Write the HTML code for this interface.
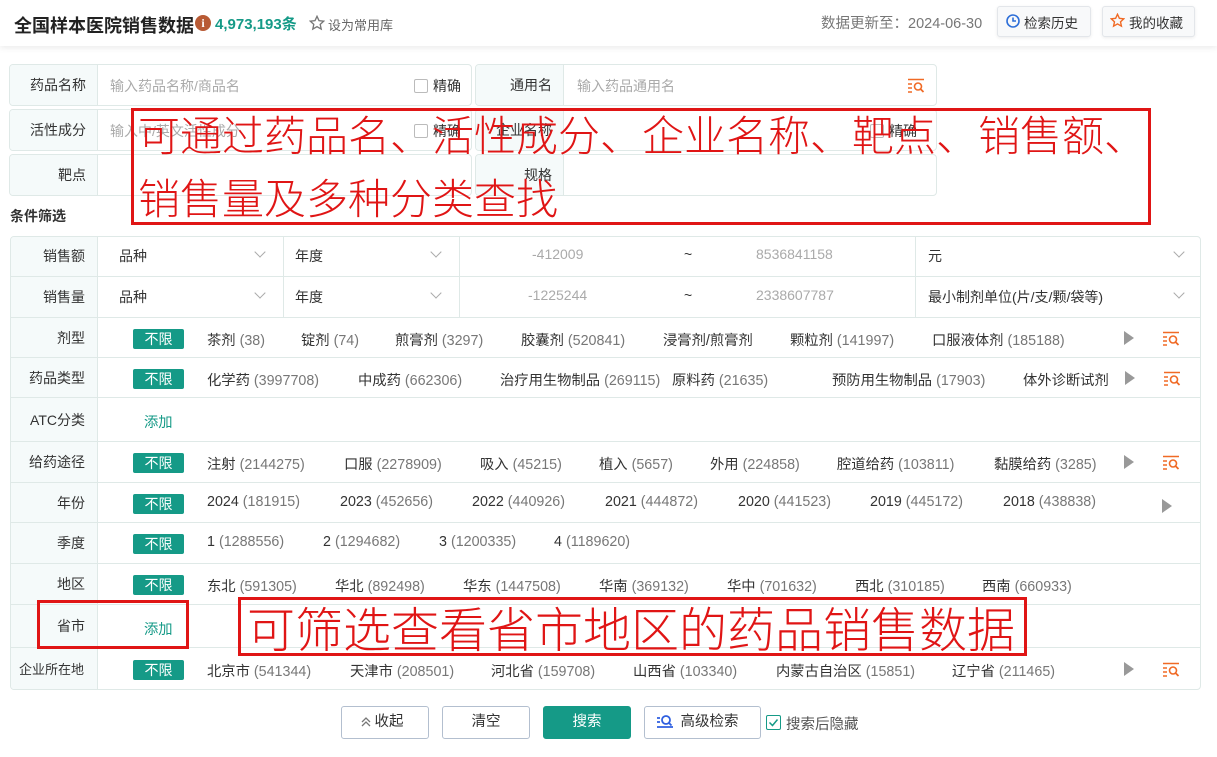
<!DOCTYPE html>
<html><head><meta charset="utf-8"><style>
*{box-sizing:border-box;margin:0;padding:0}
body{width:1217px;height:757px;overflow:hidden;background:#fff;font-family:"Liberation Sans","Noto Sans CJK SC",sans-serif;font-size:14px;color:#333;position:relative}
.a{position:absolute;white-space:nowrap}
.top{position:absolute;left:0;top:0;width:1217px;height:46px;background:#fff;box-shadow:0 2px 6px rgba(0,0,0,.08)}
.box{position:absolute;border:1px solid #dfe9e7;border-radius:4px;background:#fff;overflow:hidden}
.lab{position:absolute;left:0;top:0;bottom:0;background:#f5fafa;border-right:1px solid #dfe9e7;text-align:right;padding-right:11px}
.ph{color:#aaa}
.chk{display:inline-block;width:14px;height:14px;border:1px solid #bbb;border-radius:2px;vertical-align:-2px;margin-right:5px;background:#fff}
.tbl{position:absolute;left:10px;top:236px;width:1191px;height:454px;border:1px solid #dfe9e7;border-radius:4px;overflow:hidden}
.row{position:absolute;left:0;width:1191px;border-top:1px solid #dfe9e7}
.rl{position:absolute;left:0;top:0;bottom:0;width:87px;background:#f5fafa;border-right:1px solid #dfe9e7;text-align:right;padding-right:12px;white-space:nowrap}
.tag{position:absolute;left:122px;width:51px;height:20px;background:#159a87;color:#fff;border-radius:2px;text-align:center;line-height:20px;font-size:14px}
.it{position:absolute;white-space:nowrap;font-size:14.3px}
.it i{font-style:normal;color:#777}
.tri{position:absolute;width:0;height:0;border-left:10px solid #999;border-top:7px solid transparent;border-bottom:7px solid transparent}
.cell{position:absolute;top:0;bottom:0;border-right:1px solid #dfe9e7}
.chev{position:absolute;width:8px;height:8px;border-right:1px solid #aaa;border-bottom:1px solid #aaa;transform:rotate(45deg)}
.red{position:absolute;border:3px solid #e01515}
.rt{position:absolute;color:#e01515;white-space:nowrap;font-family:"Noto Sans CJK SC",sans-serif;font-weight:300}
.btn{position:absolute;top:706px;height:33px;border:1px solid #b3bfcf;border-radius:3px;text-align:center;line-height:31px;background:#fff;font-size:14.5px}
</style></head><body>
<div class="top"></div>
<div class="a" style="left:14px;top:12px;font-size:18px;font-weight:bold;color:#222">全国样本医院销售数据</div>
<div class="a" style="left:195px;top:15px;width:16px;height:16px;border-radius:50%;background:#b85a34;color:#fff;font-size:12px;font-weight:bold;text-align:center;line-height:16px;font-family:'Liberation Serif',serif">i</div>
<div class="a" style="left:215px;top:13px;font-size:15px;font-weight:bold;color:#159a87">4,973,193条</div>
<svg class="a" style="left:309px;top:15px" width="16" height="16" viewBox="0 0 24 24"><path d="M12 2l3 6.5 7 .8-5.2 4.8 1.5 7L12 17.5 5.7 21.1l1.5-7L2 9.3l7-.8z" fill="none" stroke="#777" stroke-width="2"/></svg>
<div class="a" style="left:328px;top:15px;font-size:13px;color:#666">设为常用库</div>
<div class="a" style="left:821px;top:12px;font-size:14.5px;color:#777">数据更新至：2024-06-30</div>
<div class="a" style="left:997px;top:6px;width:94px;height:31px;border:1px solid #e3e6ea;border-radius:3px;background:#f8f9fa;box-shadow:0 1px 3px rgba(0,0,0,.08)"></div>
<svg class="a" style="left:1006px;top:14px" width="14" height="14" viewBox="0 0 14 14"><circle cx="7" cy="7" r="6" fill="none" stroke="#2e6fd8" stroke-width="1.6"/><path d="M7 3.5V7h3" fill="none" stroke="#2e6fd8" stroke-width="1.6"/></svg>
<div class="a" style="left:1024px;top:12px;font-size:13.5px">检索历史</div>
<div class="a" style="left:1102px;top:6px;width:93px;height:31px;border:1px solid #e3e6ea;border-radius:3px;background:#f8f9fa;box-shadow:0 1px 3px rgba(0,0,0,.08)"></div>
<svg class="a" style="left:1110px;top:13px" width="15" height="15" viewBox="0 0 24 24"><path d="M12 2l3 6.5 7 .8-5.2 4.8 1.5 7L12 17.5 5.7 21.1l1.5-7L2 9.3l7-.8z" fill="none" stroke="#f06a25" stroke-width="2.2"/></svg>
<div class="a" style="left:1129px;top:12px;font-size:13.5px">我的收藏</div>

<div class="box" style="left:9px;top:64px;width:463px;height:42px"><div class="lab" style="width:88px;line-height:40px">药品名称</div><div class="a ph" style="left:100px;top:11px">输入药品名称/商品名</div><div class="a" style="left:404px;top:11px"><span class="chk"></span>精确</div></div>
<div class="box" style="left:475px;top:64px;width:462px;height:42px"><div class="lab" style="width:88px;line-height:40px">通用名</div><div class="a ph" style="left:101px;top:11px">输入药品通用名</div>
<svg class="a" style="left:431px;top:13px" width="18" height="15" viewBox="0 0 18 15"><path d="M1 1.5h16M1 6h4M1 10h4M1 14h4" stroke="#f06a25" stroke-width="1.6"/><circle cx="11" cy="8.5" r="3.5" fill="none" stroke="#f06a25" stroke-width="1.6"/><path d="M13.5 11l3 3" stroke="#f06a25" stroke-width="1.8"/></svg></div>
<div class="box" style="left:9px;top:109px;width:463px;height:42px"><div class="lab" style="width:88px;line-height:40px">活性成分</div><div class="a ph" style="left:100px;top:11px">输入中/英文活性成分</div><div class="a" style="left:404px;top:11px"><span class="chk"></span>精确</div></div>
<div class="box" style="left:475px;top:109px;width:462px;height:42px"><div class="lab" style="width:88px;line-height:40px">企业名称</div><div class="a" style="left:394px;top:11px"><span class="chk"></span>精确</div></div>
<div class="box" style="left:9px;top:154px;width:463px;height:42px"><div class="lab" style="width:88px;line-height:40px">靶点</div></div>
<div class="box" style="left:475px;top:154px;width:462px;height:42px"><div class="lab" style="width:88px;line-height:40px">规格</div></div>
<div class="a" style="left:10px;top:206px;font-size:14px;font-weight:bold">条件筛选</div>

<div class="tbl">
<div class="row" style="top:-1px;height:41px;border-top:none"><div class="rl" style="line-height:40px">销售额</div>
<div class="cell" style="left:87px;width:186px"><span class="a" style="left:21px;top:10px">品种</span><span class="chev" style="left:158px;top:12px"></span></div>
<div class="cell" style="left:273px;width:176px"><span class="a" style="left:11px;top:10px">年度</span><span class="chev" style="left:148px;top:12px"></span></div>
<div class="cell" style="left:449px;width:456px"><span class="a ph" style="left:72px;top:10px">-412009</span><span class="a" style="left:224px;top:10px">~</span><span class="a ph" style="left:296px;top:10px">8536841158</span></div>
<span class="a" style="left:917px;top:10px">元</span><span class="chev" style="left:1164px;top:12px"></span></div>
<div class="row" style="top:39px;height:41px"><div class="rl" style="line-height:40px">销售量</div>
<div class="cell" style="left:87px;width:186px"><span class="a" style="left:21px;top:10px">品种</span><span class="chev" style="left:158px;top:12px"></span></div>
<div class="cell" style="left:273px;width:176px"><span class="a" style="left:11px;top:10px">年度</span><span class="chev" style="left:148px;top:12px"></span></div>
<div class="cell" style="left:449px;width:456px"><span class="a ph" style="left:68px;top:10px">-1225244</span><span class="a" style="left:224px;top:10px">~</span><span class="a ph" style="left:296px;top:10px">2338607787</span></div>
<span class="a" style="left:917px;top:10px">最小制剂单位(片/支/颗/袋等)</span><span class="chev" style="left:1164px;top:12px"></span></div>

<div class="row" style="top:80px;height:41px"><div class="rl" style="line-height:40px">剂型</div><div class="tag" style="top:11px">不限</div>
<span class="it" style="left:196px;top:11px">茶剂 <i>(38)</i></span><span class="it" style="left:290px;top:11px">锭剂 <i>(74)</i></span><span class="it" style="left:384px;top:11px">煎膏剂 <i>(3297)</i></span><span class="it" style="left:510px;top:11px">胶囊剂 <i>(520841)</i></span><span class="it" style="left:652px;top:11px">浸膏剂/煎膏剂</span><span class="it" style="left:779px;top:11px">颗粒剂 <i>(141997)</i></span><span class="it" style="left:921px;top:11px">口服液体剂 <i>(185188)</i></span>
<div class="tri" style="left:1113px;top:13px"></div><svg class="a" style="left:1151px;top:13px" width="18" height="15" viewBox="0 0 18 15"><path d="M1 1.5h16M1 6h4M1 10h4M1 14h4" stroke="#f06a25" stroke-width="1.6"/><circle cx="11" cy="8.5" r="3.5" fill="none" stroke="#f06a25" stroke-width="1.6"/><path d="M13.5 11l3 3" stroke="#f06a25" stroke-width="1.8"/></svg></div>

<div class="row" style="top:120px;height:41px"><div class="rl" style="line-height:40px">药品类型</div><div class="tag" style="top:11px">不限</div>
<span class="it" style="left:196px;top:11px">化学药 <i>(3997708)</i></span><span class="it" style="left:347px;top:11px">中成药 <i>(662306)</i></span><span class="it" style="left:489px;top:11px">治疗用生物制品 <i>(269115)</i></span><span class="it" style="left:661px;top:11px">原料药 <i>(21635)</i></span><span class="it" style="left:821px;top:11px">预防用生物制品 <i>(17903)</i></span><span class="it" style="left:1012px;top:11px">体外诊断试剂</span>
<div class="tri" style="left:1114px;top:13px"></div><svg class="a" style="left:1152px;top:13px" width="18" height="15" viewBox="0 0 18 15"><path d="M1 1.5h16M1 6h4M1 10h4M1 14h4" stroke="#f06a25" stroke-width="1.6"/><circle cx="11" cy="8.5" r="3.5" fill="none" stroke="#f06a25" stroke-width="1.6"/><path d="M13.5 11l3 3" stroke="#f06a25" stroke-width="1.8"/></svg></div>

<div class="row" style="top:160px;height:45px"><div class="rl" style="line-height:44px">ATC分类</div><span class="it" style="left:133px;top:13px;color:#159a87">添加</span></div>

<div class="row" style="top:204px;height:42px"><div class="rl" style="line-height:41px">给药途径</div><div class="tag" style="top:11px">不限</div>
<span class="it" style="left:196px;top:11px">注射 <i>(2144275)</i></span><span class="it" style="left:333px;top:11px">口服 <i>(2278909)</i></span><span class="it" style="left:469px;top:11px">吸入 <i>(45215)</i></span><span class="it" style="left:588px;top:11px">植入 <i>(5657)</i></span><span class="it" style="left:699px;top:11px">外用 <i>(224858)</i></span><span class="it" style="left:826px;top:11px">腔道给药 <i>(103811)</i></span><span class="it" style="left:983px;top:11px">黏膜给药 <i>(3285)</i></span>
<div class="tri" style="left:1113px;top:13px"></div><svg class="a" style="left:1151px;top:13px" width="18" height="15" viewBox="0 0 18 15"><path d="M1 1.5h16M1 6h4M1 10h4M1 14h4" stroke="#f06a25" stroke-width="1.6"/><circle cx="11" cy="8.5" r="3.5" fill="none" stroke="#f06a25" stroke-width="1.6"/><path d="M13.5 11l3 3" stroke="#f06a25" stroke-width="1.8"/></svg></div>

<div class="row" style="top:245px;height:41px"><div class="rl" style="line-height:40px">年份</div><div class="tag" style="top:11px">不限</div>
<span class="it" style="left:196px;top:11px">2024 <i>(181915)</i></span><span class="it" style="left:329px;top:11px">2023 <i>(452656)</i></span><span class="it" style="left:461px;top:11px">2022 <i>(440926)</i></span><span class="it" style="left:594px;top:11px">2021 <i>(444872)</i></span><span class="it" style="left:727px;top:11px">2020 <i>(441523)</i></span><span class="it" style="left:859px;top:11px">2019 <i>(445172)</i></span><span class="it" style="left:992px;top:11px">2018 <i>(438838)</i></span>
<div class="tri" style="left:1151px;top:16px"></div></div>

<div class="row" style="top:285px;height:41px"><div class="rl" style="line-height:40px">季度</div><div class="tag" style="top:11px">不限</div>
<span class="it" style="left:196px;top:11px">1 <i>(1288556)</i></span><span class="it" style="left:312px;top:11px">2 <i>(1294682)</i></span><span class="it" style="left:428px;top:11px">3 <i>(1200335)</i></span><span class="it" style="left:543px;top:11px">4 <i>(1189620)</i></span></div>

<div class="row" style="top:326px;height:41px"><div class="rl" style="line-height:40px">地区</div><div class="tag" style="top:11px">不限</div>
<span class="it" style="left:196px;top:11px">东北 <i>(591305)</i></span><span class="it" style="left:324px;top:11px">华北 <i>(892498)</i></span><span class="it" style="left:452px;top:11px">华东 <i>(1447508)</i></span><span class="it" style="left:588px;top:11px">华南 <i>(369132)</i></span><span class="it" style="left:716px;top:11px">华中 <i>(701632)</i></span><span class="it" style="left:844px;top:11px">西北 <i>(310185)</i></span><span class="it" style="left:971px;top:11px">西南 <i>(660933)</i></span></div>

<div class="row" style="top:367px;height:44px"><div class="rl" style="line-height:43px">省市</div><span class="it" style="left:133px;top:13px;color:#159a87">添加</span></div>

<div class="row" style="top:410px;height:44px"><div class="rl" style="line-height:43px;padding-right:13px;font-size:13px">企业所在地</div><div class="tag" style="top:12px">不限</div>
<span class="it" style="left:196px;top:12px">北京市 <i>(541344)</i></span><span class="it" style="left:339px;top:12px">天津市 <i>(208501)</i></span><span class="it" style="left:480px;top:12px">河北省 <i>(159708)</i></span><span class="it" style="left:622px;top:12px">山西省 <i>(103340)</i></span><span class="it" style="left:765px;top:12px">内蒙古自治区 <i>(15851)</i></span><span class="it" style="left:941px;top:12px">辽宁省 <i>(211465)</i></span>
<div class="tri" style="left:1113px;top:14px"></div><svg class="a" style="left:1151px;top:14px" width="18" height="15" viewBox="0 0 18 15"><path d="M1 1.5h16M1 6h4M1 10h4M1 14h4" stroke="#f06a25" stroke-width="1.6"/><circle cx="11" cy="8.5" r="3.5" fill="none" stroke="#f06a25" stroke-width="1.6"/><path d="M13.5 11l3 3" stroke="#f06a25" stroke-width="1.8"/></svg></div>
</div>

<div class="btn" style="left:341px;width:88px;padding-left:8px">收起</div>
<svg class="a" style="left:361px;top:717px" width="10" height="10" viewBox="0 0 10 10"><path d="M1 5l4-4 4 4M1 9l4-4 4 4" fill="none" stroke="#777" stroke-width="1.3"/></svg>
<div class="btn" style="left:442px;width:88px">清空</div>
<div class="btn" style="left:543px;width:88px;background:#159a87;border-color:#159a87;color:#fff">搜索</div>
<div class="btn" style="left:644px;width:117px;padding-left:14px">高级检索</div>
<svg class="a" style="left:656px;top:714px" width="18" height="15" viewBox="0 0 18 15"><path d="M1 4h3M1 8h3M1 13h16" stroke="#2e5fe0" stroke-width="1.8"/><circle cx="10" cy="6" r="4" fill="none" stroke="#2e5fe0" stroke-width="1.8"/><path d="M13 9l2.5 2.5" stroke="#2e5fe0" stroke-width="1.8"/></svg>
<div class="a" style="left:766px;top:715px;width:15px;height:15px;border:1px solid #159a87;border-radius:2px"></div>
<svg class="a" style="left:768px;top:717px" width="11" height="11" viewBox="0 0 11 11"><path d="M1.5 5.5l3 3 5-6" fill="none" stroke="#159a87" stroke-width="1.5"/></svg>
<div class="a" style="left:786px;top:713px;color:#555;font-size:14.5px">搜索后隐藏</div>

<div class="red" style="left:131px;top:108px;width:1020px;height:117px"></div>
<div class="rt" style="left:138px;top:104px;font-size:42px;line-height:60px">可通过药品名、活性成分、企业名称、靶点、销售额、</div>
<div class="rt" style="left:138px;top:167px;font-size:42px;line-height:60px">销售量及多种分类查找</div>
<div class="red" style="left:37px;top:600px;width:152px;height:49px"></div>
<div class="red" style="left:238px;top:597px;width:789px;height:59px"></div>
<div class="rt" style="left:247px;top:595px;font-size:48px;line-height:62px">可筛选查看省市地区的药品销售数据</div>
</body></html>
